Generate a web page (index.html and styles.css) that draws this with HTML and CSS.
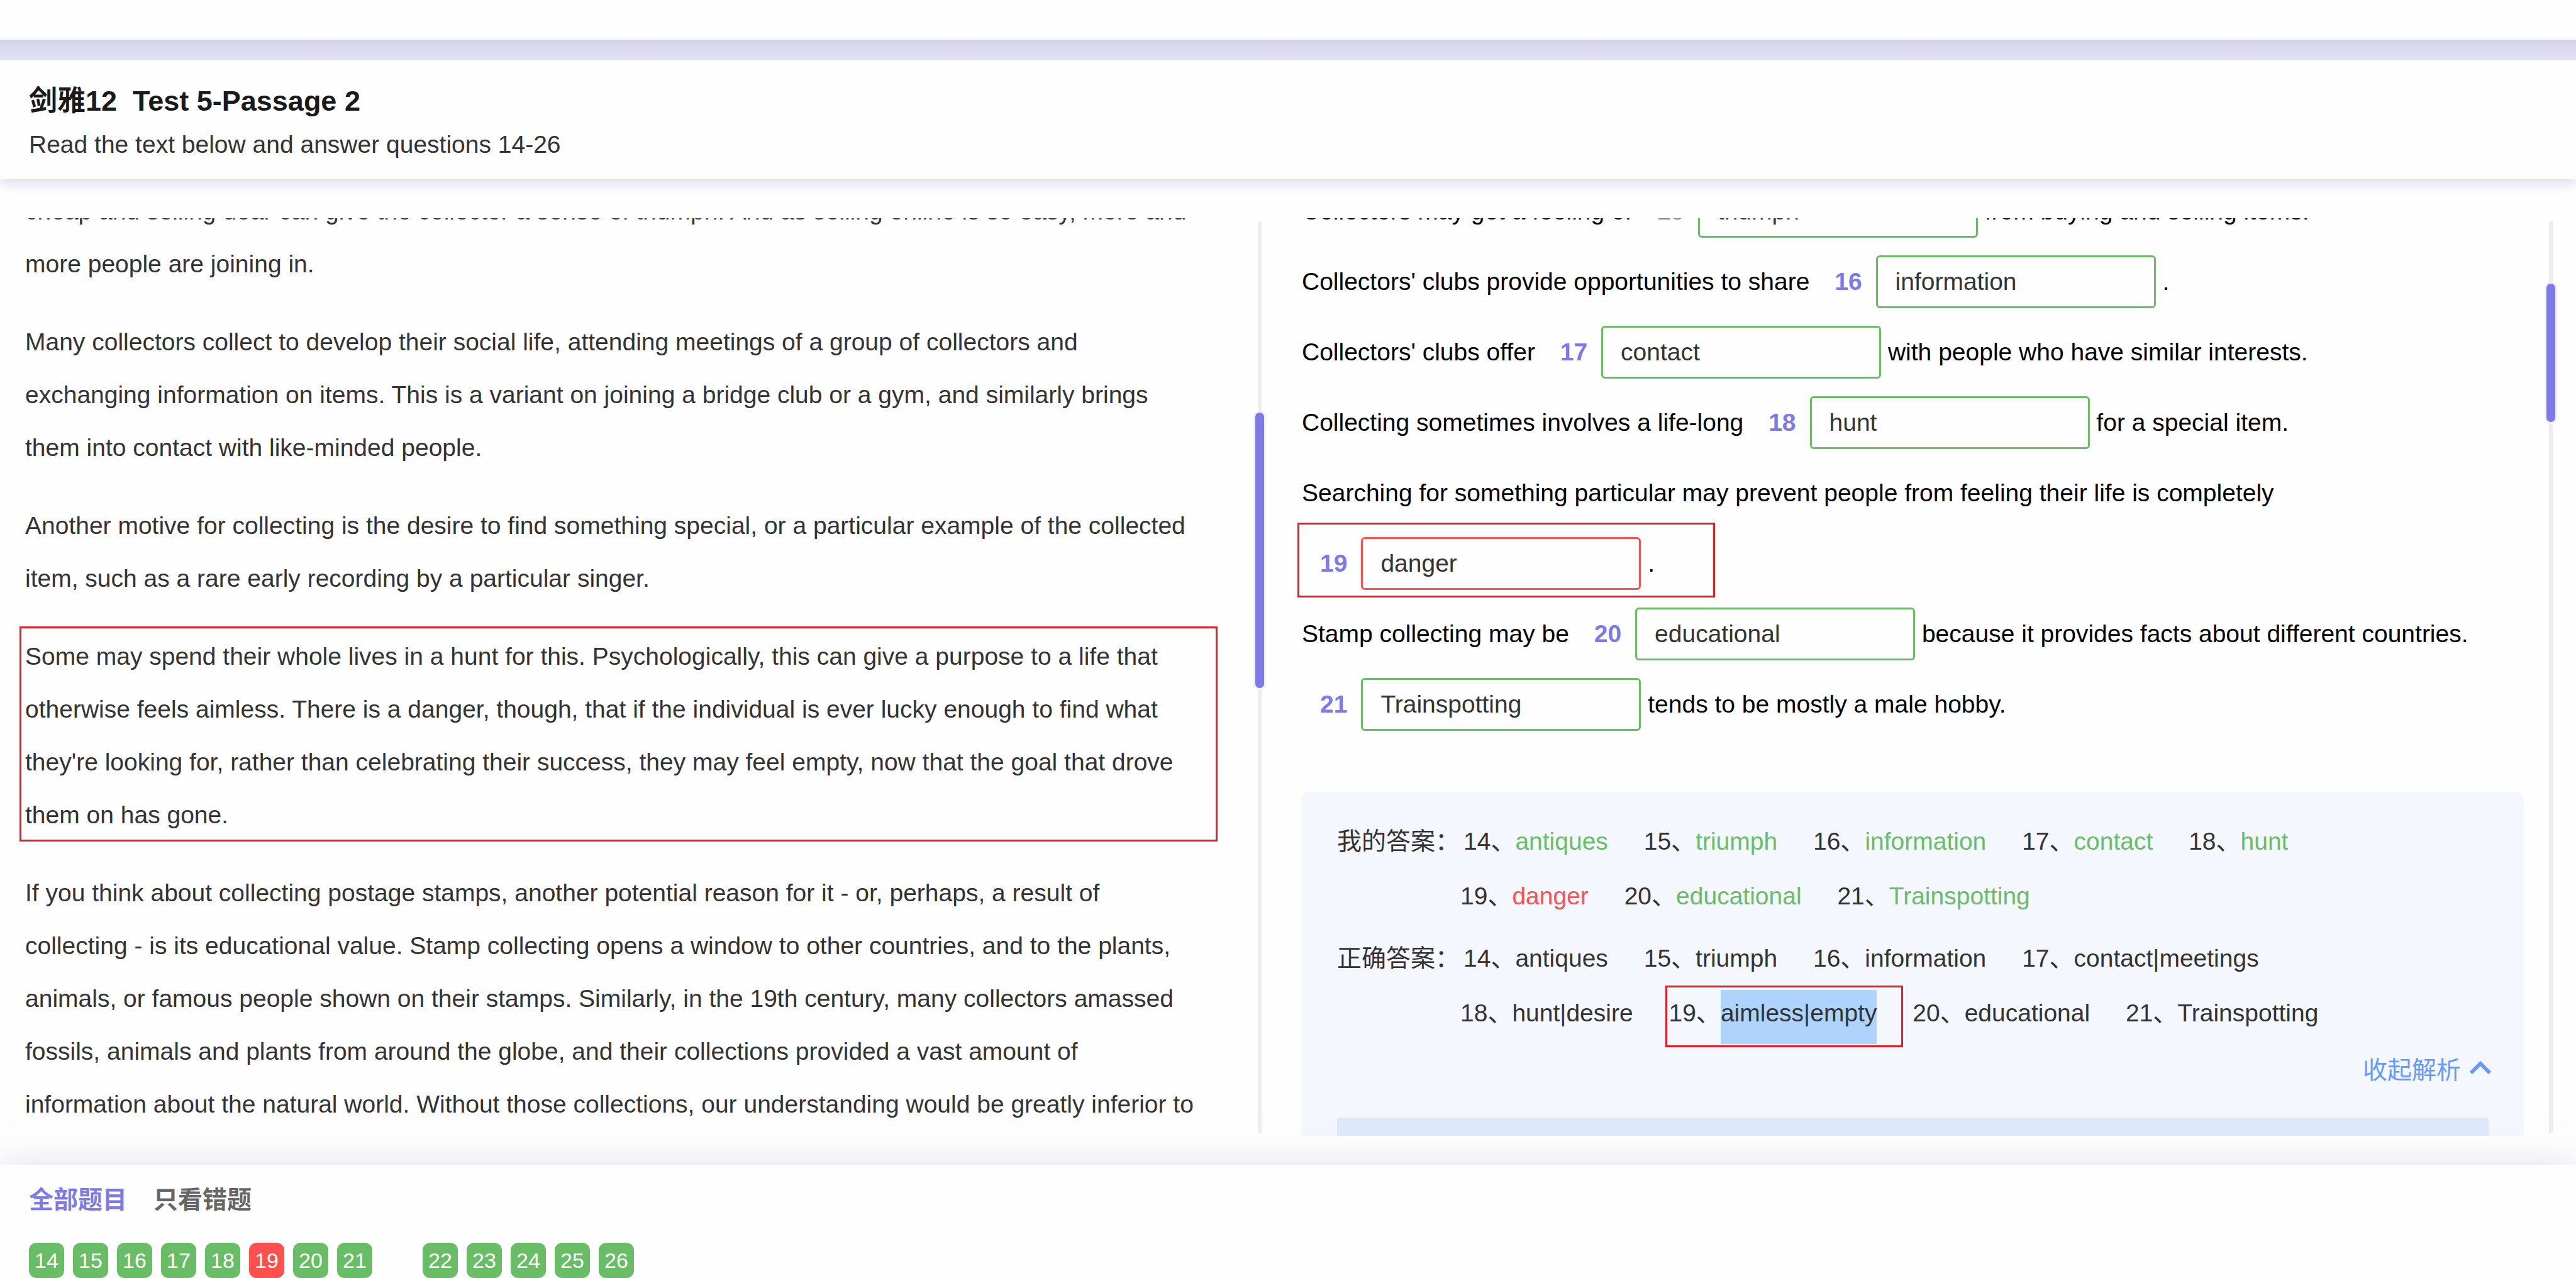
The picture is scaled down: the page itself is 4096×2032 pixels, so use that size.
FILE: index.html
```html
<!DOCTYPE html>
<html lang="zh-CN">
<head>
<meta charset="utf-8">
<title>剑雅12 Test 5-Passage 2</title>
<link rel="stylesheet" href="styles.css">
</head>
<body>
<div class="page">
  <div class="topbar"></div>
  <header class="header">
    <h1 class="title">剑雅12&nbsp; Test 5-Passage 2</h1>
    <p class="subtitle">Read the text below and answer questions 14-26</p>
  </header>

  <main class="main">
    <article class="panel passage">
      <div class="passage-body">
        <p>cheap and selling dear can give the collector a sense of triumph. And as selling online is so easy, more and more people are joining in.</p>
        <p>Many collectors collect to develop their social life, attending meetings of a group of collectors and exchanging information on items. This is a variant on joining a bridge club or a gym, and similarly brings them into contact with like-minded people.</p>
        <p>Another motive for collecting is the desire to find something special, or a particular example of the collected item, such as a rare early recording by a particular singer.</p>
        <p class="marked marked-paragraph">Some may spend their whole lives in a hunt for this. Psychologically, this can give a purpose to a life that otherwise feels aimless. There is a danger, though, that if the individual is ever lucky enough to find what they're looking for, rather than celebrating their success, they may feel empty, now that the goal that drove them on has gone.</p>
        <p>If you think about collecting postage stamps, another potential reason for it - or, perhaps, a result of collecting - is its educational value. Stamp collecting opens a window to other countries, and to the plants, animals, or famous people shown on their stamps. Similarly, in the 19th century, many collectors amassed fossils, animals and plants from around the globe, and their collections provided a vast amount of information about the natural world. Without those collections, our understanding would be greatly inferior to</p>
      </div>
    </article>
    <div class="track"><div class="thumb" style="top:21%;height:30.2%"></div></div>

    <section class="panel questions">
      <div class="questions-body">
        <p>Collectors may get a feeling of <span class="blank"><label for="q15">15</label><input id="q15" type="text" value="triumph"></span> from buying and selling items.</p>
        <p>Collectors' clubs provide opportunities to share <span class="blank"><label for="q16">16</label><input id="q16" type="text" value="information"></span> .</p>
        <p>Collectors' clubs offer <span class="blank"><label for="q17">17</label><input id="q17" type="text" value="contact"></span> with people who have similar interests.</p>
        <p>Collecting sometimes involves a life-long <span class="blank"><label for="q18">18</label><input id="q18" type="text" value="hunt"></span> for a special item.</p>
        <p>Searching for something particular may prevent people from feeling their life is completely <span class="blank marked marked-blank"><label for="q19">19</label><input id="q19" class="wrong-input" type="text" value="danger"></span> .</p>
        <p>Stamp collecting may be <span class="blank"><label for="q20">20</label><input id="q20" type="text" value="educational"></span> because it provides facts about different countries.</p>
        <p><span class="blank"><label for="q21">21</label><input id="q21" type="text" value="Trainspotting"></span> tends to be mostly a male hobby.</p>

        <div class="answers">
          <div class="answer-row"><span class="answer-label">我的答案：</span><span class="item">14、<span class="right">antiques</span></span>
            <span class="item">15、<span class="right">triumph</span></span>
            <span class="item">16、<span class="right">information</span></span>
            <span class="item">17、<span class="right">contact</span></span>
            <span class="item">18、<span class="right">hunt</span></span>
            <span class="item">19、<span class="wrong">danger</span></span>
            <span class="item">20、<span class="right">educational</span></span>
            <span class="item">21、<span class="right">Trainspotting</span></span></div>
          <div class="answer-row"><span class="answer-label">正确答案：</span><span class="item">14、antiques</span>
            <span class="item">15、triumph</span>
            <span class="item">16、information</span>
            <span class="item">17、contact|meetings</span>
            <span class="item">18、hunt|desire</span>
            <span class="item marked marked-item">19、<mark>aimless|empty</mark></span>
            <span class="item">20、educational</span>
            <span class="item">21、Trainspotting</span></div>
          <div class="answer-actions">
            <button type="button" class="collapse">收起解析
              <svg class="chevron" viewBox="0 0 36 24" width="36" height="24" aria-hidden="true"><path d="M3 20 18 5 33 20" fill="none" stroke="currentColor" stroke-width="6"/></svg>
            </button>
          </div>
          <div class="analysis"></div>
        </div>
      </div>
    </section>
    <div class="track"><div class="thumb" style="top:6.8%;height:15.2%"></div></div>
  </main>

  <footer class="footer">
    <div class="tabs">
      <button type="button" class="tab tab-active">全部题目</button>
      <button type="button" class="tab">只看错题</button>
    </div>
    <nav class="numbers">
      <div class="group">
        <button type="button" class="chip">14</button>
        <button type="button" class="chip">15</button>
        <button type="button" class="chip">16</button>
        <button type="button" class="chip">17</button>
        <button type="button" class="chip">18</button>
        <button type="button" class="chip chip-wrong">19</button>
        <button type="button" class="chip">20</button>
        <button type="button" class="chip">21</button>
      </div>
      <div class="group">
        <button type="button" class="chip">22</button>
        <button type="button" class="chip">23</button>
        <button type="button" class="chip">24</button>
        <button type="button" class="chip">25</button>
        <button type="button" class="chip">26</button>
      </div>
    </nav>
  </footer>
</div>
</body>
</html>
```
FILE: styles.css
```css
* {
  box-sizing: border-box;
}

body,
h1,
p {
  margin: 0;
}

body {
  background: #fefefe;
  color: #333;
  font-family: "Liberation Sans", "Noto Sans CJK SC", sans-serif;
  font-size: 39px;
}

button,
input {
  font: inherit;
}

button {
  padding: 0;
  border: 0;
  background: none;
  cursor: pointer;
}

.page {
  display: flex;
  flex-direction: column;
  height: 100vh;
  overflow: hidden;
}

.topbar {
  flex: none;
  height: 96px;
  background: linear-gradient(#fefefe 63px, #d2d1ea 63px, #dcdcf0 80px, #e4e3f3 96px);
}

.header {
  flex: none;
  padding: 35px 46px 25px;
  line-height: 60px;
  background: #fefefe;
  box-shadow: 0 8px 18px #dddff0;
}

.title {
  margin-bottom: 9px;
  color: #1a1a1a;
  font-size: 45px;
  font-weight: bold;
}

.main {
  flex: 1;
  min-height: 0;
  display: grid;
  grid-template-columns: 1996fr 14px 2039fr 14px;
  grid-template-rows: minmax(0, 1fr);
  padding: 62px 33px 46px 0;
}

.panel {
  overflow: hidden;
}

.passage {
  padding: 0 80px 0 40px;
}

.passage-body {
  display: flex;
  flex-direction: column;
  gap: 40px;
  margin-top: -53px;
  line-height: 84px;
}

.marked {
  position: relative;
}

.marked::after {
  content: "";
  position: absolute;
  border: 3px solid #ed1c24;
  pointer-events: none;
}

.marked-paragraph::after {
  inset: -6px -20px 0 -9px;
}

.marked-blank::after {
  inset: -9px -118px 2px -7px;
}

.marked-item::after {
  inset: 0 -42px -11px -5px;
}

.track {
  position: relative;
  margin: 5px 0;
  background: linear-gradient(#eee, #eee) center / 6px 100% no-repeat;
}

.thumb {
  position: absolute;
  left: 0;
  width: 14px;
  border-radius: 7px;
  background: #7d7ae8;
  box-shadow: 0 0 0 3px #f1f0fc;
}

.questions {
  padding: 0 36px 0 60px;
}

.questions-body {
  margin-top: -67px;
  color: #000;
  line-height: 112px;
}

.blank {
  display: inline-block;
  white-space: nowrap;
}

.blank label {
  margin: 0 22px 0 29px;
  color: #7d7ae8;
  font-weight: bold;
}

.blank input {
  width: 445px;
  height: 84px;
  padding: 0 28px;
  border: 3px solid #68bd66;
  border-radius: 6px;
  background: #fefefe;
  color: #333;
}

.blank .wrong-input {
  border-color: #fd504f;
}

.answers {
  margin-top: 83px;
  padding: 35px 56px 56px;
  border-radius: 10px;
  background: #f4f7fe;
  color: #333;
  line-height: 87px;
}

.answer-row {
  margin-bottom: 12px;
  padding: 0 120px 0 196px;
  text-indent: -196px;
}

.answer-label {
  margin-right: 6px;
}

.item {
  display: inline-block;
  margin-right: 46px;
  text-indent: 0;
}

.right {
  color: #68bd66;
}

.wrong {
  color: #fd504f;
}

mark {
  padding: 15px 0 28px;
  background: #aed3fd;
  color: inherit;
}

.answer-actions {
  display: flex;
  justify-content: flex-end;
  margin: 18px -5px 45px 0;
}

.collapse {
  display: flex;
  align-items: center;
  gap: 13px;
  color: #69f;
  line-height: 60px;
}

.chevron {
  margin-bottom: 8px;
}

.analysis {
  height: 112px;
  background: #dee9fb;
}

.footer {
  flex: none;
  background: #fefefe;
  box-shadow: 0 0 50px rgba(195, 195, 223, 0.5);
}

.tabs {
  display: flex;
  gap: 42px;
  padding: 26px 46px 38px;
  line-height: 60px;
}

.tab {
  color: #666;
  font-weight: bold;
}

.tab-active {
  color: #7d7ae8;
}

.numbers {
  display: flex;
  gap: 80px;
  padding-left: 46px;
}

.group {
  display: flex;
  gap: 14px;
}

.chip {
  width: 56px;
  height: 56px;
  border-radius: 12px;
  background: #68bd66;
  color: #fff;
  font-size: 34px;
  line-height: 56px;
}

.chip-wrong {
  background: #fd504f;
}
```
